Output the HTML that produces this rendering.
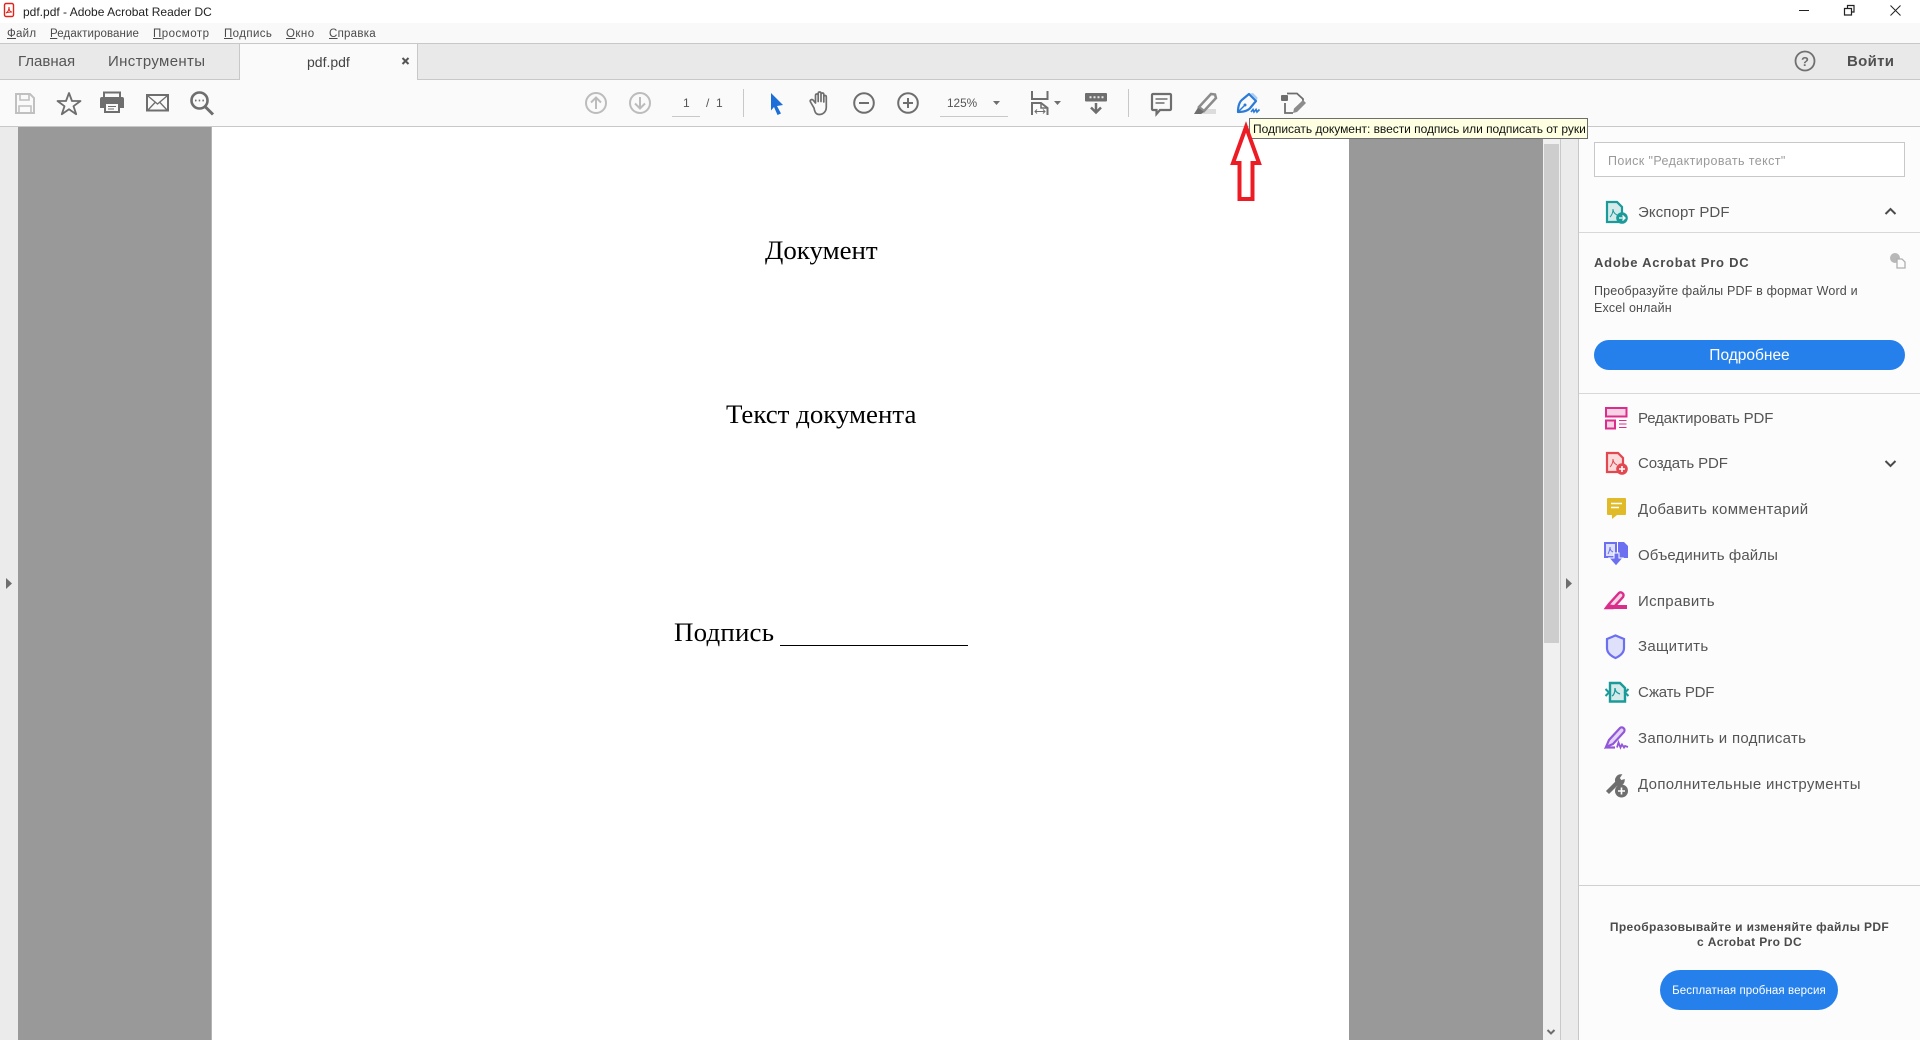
<!DOCTYPE html>
<html lang="ru"><head><meta charset="utf-8"><title>pdf.pdf - Adobe Acrobat Reader DC</title>
<style>
html,body{margin:0;padding:0;width:1920px;height:1040px;overflow:hidden;background:#fcfcfc}
body{position:relative;font-family:"Liberation Sans",sans-serif;color:#4b4b4b}
.b{position:absolute}
.t{position:absolute;white-space:nowrap;line-height:20px;height:20px}
.m{font-size:11.5px;color:#4a4a4a;top:24px;letter-spacing:.25px}
.m u{text-decoration:underline}
.r{font-size:15px;left:1638px;color:#555}
.d{font-family:"Liberation Serif",serif;font-size:26.9px;line-height:30px;height:30px;color:#000}
svg{position:absolute;left:0;top:0}
</style></head><body>
<div class="b" style="left:0;top:0;width:1920px;height:23px;background:#fff"></div>
<div class="b" style="left:0;top:23px;width:1920px;height:20px;background:#f9f9f9"></div>
<div class="b" style="left:0;top:43px;width:1920px;height:37px;background:#e9e9e9;border-top:1px solid #c8c8c8;border-bottom:1px solid #c8c8c8;box-sizing:border-box"></div>
<div class="b" style="left:239px;top:43px;width:179px;height:37px;background:#fafafa;border-left:1px solid #c8c8c8;border-right:1px solid #c8c8c8;border-top:1px solid #c8c8c8;box-sizing:border-box"></div>
<div class="b" style="left:0;top:80px;width:1920px;height:46px;background:#fafafa"></div>
<div class="b" style="left:0;top:126px;width:1920px;height:1px;background:#c8c8c8"></div>
<div class="b" style="left:0;top:127px;width:18px;height:913px;background:#ebebeb"></div>
<div class="b" style="left:18px;top:127px;width:193px;height:913px;background:#999"></div>
<div class="b" style="left:211px;top:127px;width:1px;height:913px;background:#b4b4b4"></div>
<div class="b" style="left:212px;top:127px;width:1137px;height:913px;background:#fff"></div>
<div class="b" style="left:1349px;top:127px;width:194px;height:913px;background:#999"></div>
<div class="b" style="left:1543px;top:127px;width:17px;height:913px;background:#f0f0f0"></div>
<div class="b" style="left:1544px;top:144px;width:15px;height:499px;background:#cdcdcd"></div>
<div class="b" style="left:1560px;top:127px;width:1px;height:913px;background:#c8c8c8"></div>
<div class="b" style="left:1561px;top:127px;width:17px;height:913px;background:#ebebeb"></div>
<div class="b" style="left:1578px;top:127px;width:1px;height:913px;background:#c8c8c8"></div>
<div class="b" style="left:1579px;top:232px;width:341px;height:1px;background:#d8d8d8"></div>
<div class="b" style="left:1579px;top:393px;width:341px;height:1px;background:#d8d8d8"></div>
<div class="b" style="left:1579px;top:885px;width:341px;height:1px;background:#d0d0d0"></div>

<div class="t" style="left:23px;top:2px;font-size:12px;color:#222;letter-spacing:0">pdf.pdf - Adobe Acrobat Reader DC</div>
<div class="t m" style="left:7px"><u>Ф</u>айл</div>
<div class="t m" style="left:50px;letter-spacing:.1px"><u>Р</u>едактирование</div>
<div class="t m" style="left:153px;letter-spacing:.5px"><u>П</u>росмотр</div>
<div class="t m" style="left:224px;letter-spacing:.4px"><u>П</u>одпись</div>
<div class="t m" style="left:286px;letter-spacing:.45px"><u>О</u>кно</div>
<div class="t m" style="left:329px"><u>С</u>правка</div>

<div class="t" style="left:18px;top:52px;font-size:15px;color:#555">Главная</div>
<div class="t" style="left:108px;top:52px;font-size:15px;color:#555;letter-spacing:.35px">Инструменты</div>
<div class="t" style="left:307px;top:52px;font-size:14px;color:#444">pdf.pdf</div>
<div class="t" style="left:1847px;top:52px;font-size:15px;font-weight:bold;color:#505050;letter-spacing:.3px">Войти</div>

<div class="t" style="left:683px;top:93px;font-size:12px;color:#555">1</div>
<div class="t" style="left:706px;top:93px;font-size:12px;color:#555">/&nbsp;&nbsp;1</div>
<div class="b" style="left:672px;top:116px;width:28px;height:1px;background:#c8c8c8"></div>
<div class="b" style="left:743px;top:89px;width:1px;height:28px;background:#c8c8c8"></div>
<div class="b" style="left:1128px;top:89px;width:1px;height:28px;background:#c8c8c8"></div>
<div class="t" style="left:947px;top:93px;font-size:11.8px;color:#555">125%</div>
<div class="b" style="left:940px;top:116px;width:68px;height:1px;background:#c8c8c8"></div>

<div class="b" style="left:1594px;top:142px;width:311px;height:35px;background:#fff;border:1px solid #c8c8c8;box-sizing:border-box"></div>
<div class="t" style="left:1608px;top:151px;font-size:12.5px;color:#9a9a9a;letter-spacing:.4px">Поиск "Редактировать текст"</div>
<div class="t r" style="top:203px;letter-spacing:.1px">Экспорт PDF</div>
<div class="t" style="left:1594px;top:253px;font-size:13px;font-weight:bold;color:#4b4b4b;letter-spacing:.75px">Adobe Acrobat Pro DC</div>
<div class="t" style="left:1594px;top:281px;font-size:12.5px;color:#4b4b4b;letter-spacing:.18px">Преобразуйте файлы PDF в формат Word и</div>
<div class="t" style="left:1594px;top:298px;font-size:12.5px;color:#4b4b4b;letter-spacing:.15px">Excel онлайн</div>
<div class="b" style="left:1594px;top:340px;width:311px;height:30px;border-radius:15px;background:#2680eb;color:#fff;font-size:15.5px;line-height:32px;text-align:center">Подробнее</div>

<div class="t r" style="top:409px;letter-spacing:-.15px">Редактировать PDF</div>
<div class="t r" style="top:454px;letter-spacing:-.13px">Создать PDF</div>
<div class="t r" style="top:500px;letter-spacing:.38px">Добавить комментарий</div>
<div class="t r" style="top:546px;letter-spacing:.1px">Объединить файлы</div>
<div class="t r" style="top:592px;letter-spacing:.3px">Исправить</div>
<div class="t r" style="top:637px;letter-spacing:.3px">Защитить</div>
<div class="t r" style="top:683px;letter-spacing:-.2px">Сжать PDF</div>
<div class="t r" style="top:729px;letter-spacing:.3px">Заполнить и подписать</div>
<div class="t r" style="top:775px;letter-spacing:.34px">Дополнительные инструменты</div>

<div class="t" style="left:1579px;width:341px;text-align:center;top:917px;font-size:12px;font-weight:bold;color:#4b4b4b;letter-spacing:.35px">Преобразовывайте и изменяйте файлы PDF</div>
<div class="t" style="left:1579px;width:341px;text-align:center;top:932px;font-size:12px;font-weight:bold;color:#4b4b4b;letter-spacing:.35px">с Acrobat Pro DC</div>
<div class="b" style="left:1660px;top:970px;width:178px;height:40px;border-radius:20px;background:#2680eb;color:#fff;font-size:11.5px;line-height:42px;text-align:center;letter-spacing:.1px">Бесплатная пробная версия</div>

<div class="t d" style="left:765px;top:235px">Документ</div>
<div class="t d" style="left:726px;top:399px">Текст документа</div>
<div class="t d" style="left:674px;top:617px;letter-spacing:.2px">Подпись</div>
<div class="b" style="left:780px;top:645px;width:188px;height:1px;background:#000"></div>

<svg width="1920" height="1040" viewBox="0 0 1920 1040" fill="none">
<!-- app icon -->
<rect x="4.5" y="3.5" width="9" height="13" rx="1.5" stroke="#e2231a" stroke-width="1.4" fill="#fff"/>
<path d="M6 13c2-1 3-3 3-6 0 3 1 5 3 5-2 0-4 0-6 1z" stroke="#e2231a" stroke-width="1"/>
<!-- window -->
<path d="M1799 10.5h10" stroke="#222" stroke-width="1"/>
<path d="M1844.5 8.500h7v6.500h-7zM1847.500 8.500v-3h6.500v6.500h-2.500" stroke="#222" stroke-width="1.200"/>
<path d="M1890.500 5.500l10 10M1900.500 5.500l-10 10" stroke="#222" stroke-width="1"/>
<!-- tab close -->
<path d="M402.500 58l6 6M408.500 58l-6 6" stroke="#555" stroke-width="2"/>
<!-- help -->
<circle cx="1805" cy="61" r="9.500" stroke="#707070" stroke-width="1.800"/>
<text x="1805" y="66" font-family="Liberation Sans" font-weight="bold" font-size="13" fill="#707070" text-anchor="middle">?</text>
<!-- save -->
<path d="M16 94h14l4 4v15H16z" stroke="#c0c0c0" stroke-width="2"/>
<path d="M20 94v6h9v-6M19 113v-7h12v7" stroke="#c0c0c0" stroke-width="1.600"/>
<!-- star -->
<path d="M69 93l3 8h8.500l-7 5.200 2.700 8-7.200-5-7.200 5 2.700-8-7-5.200H66z" stroke="#6e6e6e" stroke-width="1.800" stroke-linejoin="round"/>
<!-- print -->
<path d="M104 97v-4.500h16V97" stroke="#6e6e6e" stroke-width="2"/>
<path d="M102 97h20a2 2 0 0 1 2 2v9h-4v5h-16v-5h-4v-9a2 2 0 0 1 2-2z" fill="#6e6e6e"/>
<rect x="106" y="104" width="12" height="7" fill="#fafafa"/>
<path d="M108 106.500h8M108 109h6" stroke="#6e6e6e"/>
<!-- mail -->
<rect x="147" y="95" width="21" height="15.500" stroke="#6e6e6e" stroke-width="2"/>
<path d="M148 96l9.500 8 9.500-8M148 110l7.500-8M167 110l-7.500-8" stroke="#6e6e6e" stroke-width="1.300"/>
<!-- search -->
<circle cx="199.500" cy="100.500" r="8" stroke="#6e6e6e" stroke-width="2.600"/>
<path d="M205 106.500l8 8" stroke="#6e6e6e" stroke-width="3"/>
<path d="M195 100.500h1.500M198.700 100.500h1.500M202.400 100.500h1.500" stroke="#6e6e6e" stroke-width="1.700"/>
<!-- up / down -->
<circle cx="596" cy="103" r="10" stroke="#bcbcbc" stroke-width="2"/>
<path d="M596 109v-11M591 102.500l5-5 5 5" stroke="#bcbcbc" stroke-width="2"/>
<circle cx="640" cy="103" r="10" stroke="#bcbcbc" stroke-width="2"/>
<path d="M640 97v11M635 103.500l5 5 5-5" stroke="#bcbcbc" stroke-width="2"/>
<!-- cursor -->
<path d="M771 93l12 12-6 1 4 7.500-3.500 1.500-3.500-8-3 3.500z" fill="#1b6fd6"/>
<!-- hand -->
<path d="M814 108l-3.500-6c-1-2 1.500-3.500 3-1.500l2 2.500V95.500c0-2 2.700-2 2.700 0v6-8c0-2 2.800-2 2.800 0v8-7c0-2 2.800-2 2.800 0v7.500-5c0-2 2.500-2 2.500 0V107c0 5-3.500 7.500-7 7.500s-4.500-2.500-5.300-6.500z" stroke="#6e6e6e" stroke-width="1.700" stroke-linejoin="round" fill="#fafafa"/>
<!-- minus / plus -->
<circle cx="864" cy="103" r="9.800" stroke="#6e6e6e" stroke-width="2"/>
<path d="M859 103h10" stroke="#6e6e6e" stroke-width="2"/>
<circle cx="908" cy="103" r="9.800" stroke="#6e6e6e" stroke-width="2"/>
<path d="M903 103h10M908 98v10" stroke="#6e6e6e" stroke-width="2"/>
<!-- zoom arrow -->
<path d="M993 101h7l-3.500 4z" fill="#6e6e6e"/>
<!-- fit -->
<path d="M1032 91v8h15.500v-8" stroke="#6e6e6e" stroke-width="2"/>
<path d="M1032 115v-12h9l6.500 5v7" stroke="#6e6e6e" stroke-width="2"/>
<path d="M1041 103v5h6" stroke="#6e6e6e" stroke-width="1.500"/>
<path d="M1035 111.500h10M1037 109.500l-2 2 2 2M1043 109.500l2 2-2 2" stroke="#6e6e6e" stroke-width="1"/>
<path d="M1054 101h7l-3.500 4z" fill="#6e6e6e"/>
<!-- scroll -->
<rect x="1085" y="93" width="22" height="8.500" rx="1" fill="#6e6e6e"/>
<path d="M1089.500 97.200h2M1093.500 97.200h2M1097.500 97.200h2M1101.500 97.200h2" stroke="#e8e8e8" stroke-width="2"/>
<path d="M1096 103v9.500M1091 107.500l5 5 5-5" stroke="#6e6e6e" stroke-width="2.500"/>
<!-- comment -->
<path d="M1153 94h17a1 1 0 0 1 1 1v14a1 1 0 0 1-1 1h-10l-3.500 4v-4h-3.500a1 1 0 0 1-1-1V95a1 1 0 0 1 1-1z" stroke="#6e6e6e" stroke-width="2.200"/>
<path d="M1155.500 99h12M1155.500 103h9" stroke="#6e6e6e" stroke-width="1.500"/>
<!-- highlight -->
<path d="M1200 109h16v5h-16z" fill="#dcdcdc"/>
<path d="M1199 107l12-13 4 .5 1 3.500-12 13z" stroke="#8c8c8c" stroke-width="2.500" fill="#fafafa"/>
<path d="M1194 114l4-6.500 6 4.500-3 2z" fill="#6e6e6e"/>
<!-- sign -->
<path d="M1238 112c0-7 2-11 5-13l6-5 7 7-5 6c-2 3-6 5-13 5z" stroke="#2b7bd8" stroke-width="2.200" fill="#fafafa" stroke-linejoin="round"/>
<path d="M1250 93.500l3-.5 4.500 4.500-.5 3z" fill="#a9cdf5"/>
<path d="M1238 112l6-6" stroke="#2b7bd8" stroke-width="1.500"/>
<circle cx="1245" cy="105" r="1.500" fill="#2b7bd8"/>
<path d="M1251 112l2-2.500 1 2.500 2-2.500 1 2.500 2.500-2.500" stroke="#2b7bd8" stroke-width="1.700"/>
<!-- edit form -->
<rect x="1281" y="95" width="7" height="6" rx="1" fill="#6e6e6e"/>
<path d="M1287 93.500h10l6 5.500v2" stroke="#6e6e6e" stroke-width="1.800"/>
<path d="M1285 103v10h8" stroke="#6e6e6e" stroke-width="1.800"/>
<path d="M1293 113l1-4.500 9-8.500 3 3-9 9z" fill="#8c8c8c"/>
<!-- side triangles -->
<path d="M6 578l6 5.500-6 5.500z" fill="#6e6e6e"/>
<path d="M1566 578l6 5.500-6 5.500z" fill="#6e6e6e"/>
<path d="M1547.500 1030l3.500 3.500 3.500-3.500" stroke="#6e6e6e" stroke-width="2"/>
<!-- chevrons -->
<path d="M1885.500 214l5-5 5 5" stroke="#4b4b4b" stroke-width="2"/>
<path d="M1885.500 461l5 5 5-5" stroke="#4b4b4b" stroke-width="2"/>
<!-- globe -->
<circle cx="1895" cy="258" r="5" fill="#b8b8b8"/>
<path d="M1897 259h5l3 3v6h-8z" fill="#fcfcfc" stroke="#b0b0b0" stroke-width="1.300"/>
<!-- export -->
<path d="M1607 202h10l5 5v15h-15z" fill="#d5ebeb" stroke="#1b9a9a" stroke-width="2.200"/>
<path d="M1610 217c2-2 3-5 3-8 0 3 2 5 4 6" stroke="#1b9a9a" stroke-width="1"/>
<circle cx="1622" cy="218" r="5.800" fill="#1b9a9a"/>
<path d="M1619 218h5.500M1622.500 215.500l2.500 2.500-2.500 2.500" stroke="#fff" stroke-width="1.300"/>
<!-- edit pdf -->
<rect x="1606" y="408" width="20.500" height="8.500" fill="#f7d3e5" stroke="#db2d8c" stroke-width="2"/>
<rect x="1606" y="420.500" width="9" height="8" fill="#f7d3e5" stroke="#db2d8c" stroke-width="2"/>
<path d="M1619 420.500h7.500M1619 424h7.500M1619 427.500h7.500" stroke="#db2d8c" stroke-width="1"/>
<!-- create pdf -->
<path d="M1607 453h11l5 5v14h-16z" fill="#fbdcdd" stroke="#e34850" stroke-width="2.200"/>
<path d="M1610 467c2-2 3-5 3-8 0 3 2 5 4 6" stroke="#e34850" stroke-width="1"/>
<circle cx="1622" cy="469" r="5.800" fill="#e34850"/>
<path d="M1619 469h6M1622 466v6" stroke="#fff" stroke-width="1.600"/>
<!-- comment -->
<path d="M1608 498h17a1 1 0 0 1 1 1v15a1 1 0 0 1-1 1h-8l-5 4v-4h-4a1 1 0 0 1-1-1v-15a1 1 0 0 1 1-1z" fill="#e0ba28"/>
<path d="M1611 503.500h11M1611 507.500h8" stroke="#fff" stroke-width="1.600"/>
<!-- combine -->
<path d="M1605 543h11v14h-11z" fill="#dde0fb" stroke="#6b6ff0" stroke-width="2"/>
<path d="M1618 542h6l4 4v12h-10z" fill="#6b6ff0"/>
<path d="M1608 554c1-2 2-4 2-7 0 3 1 4 3 5" stroke="#6b6ff0" stroke-width="1"/>
<path d="M1614 553h5v5h4l-7 8-7-8h5z" fill="#6b6ff0" stroke="#fcfcfc" stroke-width="1"/>
<!-- fix -->
<path d="M1606 608l3-4 10-11c2-2 6 1 4 4l-10 11z" fill="#f9d4e5" stroke="#db2d8c" stroke-width="2.400"/>
<path d="M1605 609l3-5 5 1h14v4z" fill="#db2d8c"/>
<!-- protect -->
<path d="M1607 639l8.500-3.500 8.500 3.500v9c0 5-4 8-8.500 10-4.500-2-8.500-5-8.500-10z" fill="#dfe1fb" stroke="#6b6ff0" stroke-width="2.200"/>
<!-- compress -->
<path d="M1610 683h10l5 5v13.500h-15z" fill="#d5ebeb" stroke="#1b9a9a" stroke-width="2.400"/>
<path d="M1612 696c2-1 3-4 3-8 0 3 2 5 5 6" stroke="#1b9a9a" stroke-width="1.300"/>
<path d="M1605.500 689l3.500 3.500-3.500 3.500M1628.500 689l-3.500 3.500 3.500 3.500" stroke="#1b9a9a" stroke-width="2"/>
<!-- fill sign -->
<path d="M1606 747l3-7 11-12c2-2 6 1 4 4l-11 12z" fill="#e4d3f7" stroke="#9256d9" stroke-width="2.200"/>
<path d="M1605 747.500h10" stroke="#9256d9" stroke-width="2.200"/>
<path d="M1617 747.500l1.500-5 2 5 1.500-3 2 3 1-1.500 3 1" stroke="#9256d9" stroke-width="1.800"/>
<!-- tools -->
<path d="M1607 791l9-9c-1-3 1-7 5-7l-2 3 2 3 3-1c0 4-4 6-7 5l-8 8z" fill="#6e6e6e" stroke="#6e6e6e" stroke-width="1.500"/>
<circle cx="1621.500" cy="791" r="6.500" fill="#6e6e6e"/>
<path d="M1618 791h7M1621.500 787.500v7" stroke="#fff" stroke-width="1.600"/>
</svg>

<!-- tooltip -->
<div class="b" style="left:1249px;top:118px;width:339px;height:21px;background:#ffffe1;border:1px solid #6e6e6e;box-sizing:border-box;font-size:12px;line-height:20px;color:#111;padding-left:3px;white-space:nowrap;letter-spacing:-.04px">Подписать документ: ввести подпись или подписать от руки</div>
<!-- red arrow -->
<svg width="1920" height="1040" viewBox="0 0 1920 1040" fill="none" style="pointer-events:none">
<path d="M1246 127L1259 163H1252.500V199H1239.500V163H1233Z" stroke="#ed1c24" stroke-width="4" fill="#fff"/>
</svg>
</body></html>
